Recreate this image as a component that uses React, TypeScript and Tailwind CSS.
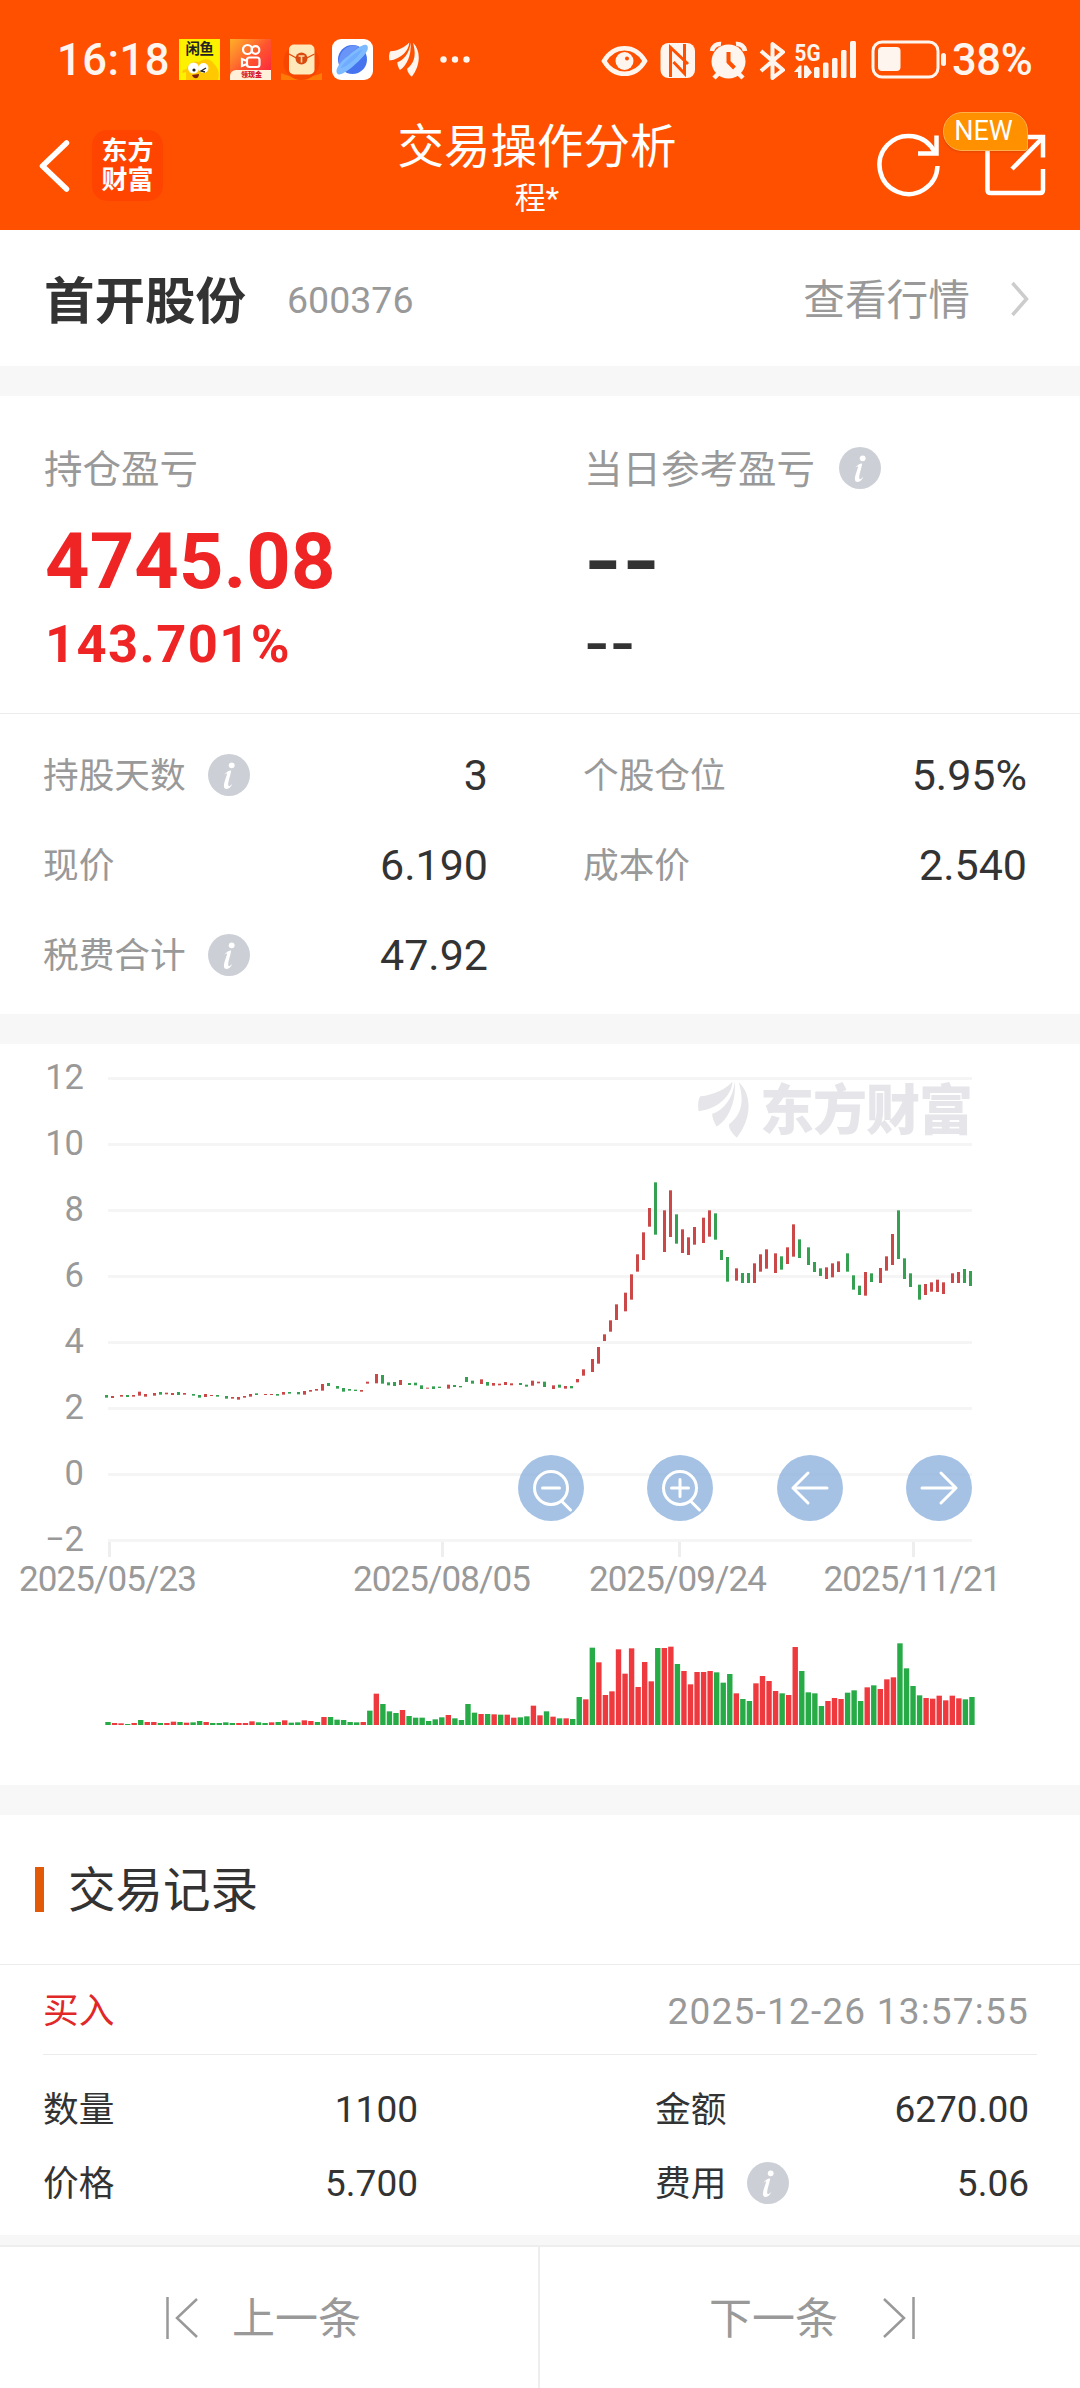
import React from "react";

type Row = [dir: "r" | "g", top: number, bottom: number, volume: number];

// Daily bars: direction, top and bottom of the candle, height of the volume column (thirds of a pixel).
const LOW: Row[] = [
  ["g", 165, 173, 9], ["r", 168, 174, 6], ["r", 165, 170, 5], ["g", 165, 171, 3], ["r", 165, 170, 6],
  ["r", 155, 167, 15], ["r", 162, 170, 9], ["r", 159, 167, 9], ["g", 156, 164, 6], ["r", 158, 163, 6],
  ["r", 159, 165, 10], ["g", 156, 165, 9], ["r", 159, 164, 7], ["g", 162, 167, 8], ["g", 165, 173, 12],
  ["r", 162, 171, 9], ["r", 165, 168, 6], ["g", 165, 170, 6], ["g", 168, 176, 8], ["r", 171, 176, 6],
  ["r", 171, 179, 6], ["r", 168, 173, 6], ["r", 162, 170, 11], ["g", 160, 165, 8], ["r", 162, 165, 6],
  ["r", 162, 165, 8], ["g", 162, 167, 9], ["r", 156, 164, 14], ["g", 156, 161, 7], ["g", 156, 163, 8],
  ["r", 153, 164, 14], ["r", 150, 155, 12], ["r", 147, 152, 9], ["r", 132, 152, 24], ["g", 129, 138, 24],
  ["g", 138, 146, 16], ["g", 144, 155, 15], ["g", 147, 152, 9], ["g", 149, 153, 8], ["r", 150, 155, 9],
  ["r", 125, 131, 43], ["r", 102, 130, 94], ["g", 105, 131, 63], ["g", 127, 136, 41], ["g", 126, 138, 36],
  ["r", 120, 135, 45], ["g", 129, 135, 27], ["g", 128, 136, 22], ["g", 136, 147, 22], ["r", 143, 146, 12],
  ["g", 139, 147, 17], ["g", 140, 144, 23], ["r", 134, 146, 30], ["g", 135, 141, 20], ["g", 138, 142, 15],
  ["g", 111, 126, 63], ["g", 122, 131, 37], ["r", 118, 132, 33], ["g", 126, 137, 33], ["r", 129, 137, 32],
  ["r", 131, 136, 31], ["r", 126, 135, 31], ["r", 130, 136, 22], ["g", 129, 135, 23], ["g", 134, 140, 26],
  ["r", 122, 137, 58], ["r", 125, 130, 29], ["g", 125, 141, 41], ["r", 136, 147, 25], ["g", 134, 143, 20],
  ["r", 138, 146, 20], ["g", 138, 145, 18], ["r", 117, 127, 84],
];
const HIGH: Row[] = [
  ["r", 928, 947, 77], ["r", 897, 936, 232], ["r", 861, 911, 188], ["r", 823, 843, 90], ["r", 781, 815, 101],
  ["r", 733, 780, 227], ["r", 698, 754, 154], ["r", 643, 719, 230], ["r", 583, 635, 114], ["r", 517, 600, 189],
  ["r", 444, 500, 131], ["g", 367, 524, 231], ["r", 451, 576, 231], ["r", 391, 531, 235], ["g", 463, 551, 183],
  ["r", 508, 579, 162], ["r", 532, 585, 122], ["r", 501, 554, 159], ["r", 473, 549, 159], ["r", 451, 530, 162],
  ["g", 460, 539, 158], ["g", 570, 600, 127], ["g", 591, 665, 153], ["r", 625, 662, 95], ["g", 639, 669, 78],
  ["g", 639, 669, 72], ["r", 610, 669, 125], ["r", 583, 635, 147], ["r", 568, 626, 132], ["r", 580, 639, 102],
  ["g", 589, 629, 95], ["r", 562, 612, 90], ["r", 493, 590, 234], ["g", 538, 594, 162], ["g", 562, 615, 98],
  ["g", 606, 636, 95], ["g", 625, 648, 57], ["r", 622, 657, 72], ["r", 610, 652, 81], ["r", 604, 636, 78],
  ["g", 580, 635, 97], ["g", 646, 689, 104], ["g", 677, 705, 72], ["r", 636, 707, 113], ["g", 640, 666, 119],
  ["r", 624, 669, 108], ["r", 589, 632, 137], ["r", 522, 615, 143], ["g", 451, 597, 245], ["g", 595, 657, 170],
  ["g", 640, 681, 117], ["g", 674, 719, 89], ["r", 672, 705, 81], ["r", 667, 695, 79], ["r", 659, 696, 88],
  ["r", 667, 702, 74], ["r", 640, 669, 88], ["r", 636, 669, 80], ["g", 627, 669, 77], ["g", 633, 678, 84],
];

const BARS = [
  ...LOW.map(([d, t, b, v]) => ({ d, y: 296 + t / 3, h: (b - t) / 3, v: v / 3 })),
  ...HIGH.map(([d, t, b, v]) => ({ d, y: 16 + t / 3, h: (b - t) / 3, v: v / 3 })),
];

// Colours of the volume columns, ten to a group.
const VOLUME_COLORS = [
  "grrgrgrrgr", "rgrggrgggg", "rrrggrgrgg", "rrgrgggggr", "grgggrgggg", "ggrggggrgr", "grrggrrgrg",
  "rggrgrrrrr", "rrrrgrrgrr", "rrrgggrggr", "rrrgrrgggg", "rrrgggrgrr", "rggggrrrrr", "rgg",
].join("");

function Info() {
  return (
    <svg className="size-[42px] shrink-0" viewBox="0 0 42 42">
      <circle cx="21" cy="21" r="21" fill="#ccd0d6" />
      <circle cx="23.700" cy="11.300" r="2.900" fill="#fff" />
      <path d="M16.200 20.600c2.500-2.700 5-4.300 7-4.100-.6 4.700-3.300 11-3 14.600.1 2.200 2.200.7 4.200-1.300-1.200 2.700-3.400 5.300-5.700 5.300-5.800-.5-.8-10.200.5-15.300-.8-.6-2 .5-3 .8z" fill="#fff" />
    </svg>
  );
}

function Feather({ className, fill }: { className?: string; fill: string }) {
  return (
    <svg className={className} viewBox="414 62 154 172" preserveAspectRatio="none" fill={fill}>
      <path d="M421 108C460 105 500 85 518 64 517 100 480 145 416 153 413 135 414 118 421 108z" />
      <path d="M525 64C530 125 505 180 470 199 462 185 456 172 457 161 490 150 520 115 525 64z" />
      <path d="M537 66C580 105 575 180 531 233 520 222 508 210 507 193 545 165 555 125 537 66z" />
    </svg>
  );
}

function StatusBar() {
  return (
    <div className="flex h-[118px] items-center pt-[1px] text-[#fff5ef]">
      <span className="ml-[57px] w-[122px] pt-[2px] text-[43.500px] font-medium leading-none tracking-[0.5px]">16:18</span>
      <div className="relative size-[41px] overflow-hidden bg-[#fdf100]">
        <span className="block pt-[4px] text-center text-[14.500px] font-bold leading-none tracking-[-0.5px] text-[#222]">闲鱼</span>
        <svg className="absolute inset-0 size-[41px]" viewBox="0 0 41 41">
          <path d="M7 41V33L3 34 4 31 8 30C9 24 14 22 20 23c5-4 12-4 15 2 4 4 6 9 4 16z" fill="#ffc800" />
          <circle cx="14.500" cy="29" r="5.500" fill="#fff" /><circle cx="24.500" cy="29" r="5" fill="#fff" />
          <circle cx="15" cy="31" r="1.600" fill="#222" /><path d="M27 29l-5 3 4 1" stroke="#222" strokeWidth="1.300" fill="none" />
          <path d="M13 36l7-1c0 5-5 6-7 1z" fill="#7d2010" />
        </svg>
      </div>
      <div className="ml-[10px] flex h-[41px] w-[41px] flex-col bg-linear-to-br from-[#ffae27] via-[#ff542e] to-[#fa0340]">
        <svg className="h-[31px] w-[41px]" viewBox="0 0 41 31" fill="none" stroke="#fff" strokeWidth="2.200">
          <circle cx="17.500" cy="10.500" r="4.500" /><circle cx="25.500" cy="11" r="3.800" />
          <rect x="17" y="18.500" width="12.500" height="9.500" rx="2.500" /><path d="M17 22l-5-2v7l5-2" />
        </svg>
        <span className="block h-[10px] rounded-tl-md bg-[#fff0da] pl-[11px] text-[7px] font-black leading-[10px] text-[#d6122c]">领现金</span>
      </div>
      <svg className="ml-[10px] size-[41px]" viewBox="0 0 41 41">
        <rect width="41" height="41" fill="#ff4f00" />
        <path d="M0 41V34Q20 43 41 34V41z" fill="#ff7b08" />
        <circle cx="20.500" cy="23" r="18" fill="#f64600" />
        <rect x="8" y="5.500" width="25.500" height="30" rx="5" fill="#ffe8ba" />
        <path d="M8 15q6 4 12.500 5.500Q27 19 33.500 15" fill="none" stroke="#e14c0c" strokeWidth="1.200" />
        <circle cx="20.500" cy="19.500" r="6" fill="#da4b10" />
        <path d="M17.500 17h6M20.500 17v6.500" stroke="#ffd9a0" strokeWidth="1.600" />
      </svg>
      <svg className="ml-[10px] size-[41px]" viewBox="0 0 41 41">
        <rect width="41" height="41" rx="9" fill="#fff" />
        <circle cx="20.500" cy="20.500" r="14.500" fill="#4674ee" />
        <path d="M7 23C7 11 18 4 27 7.500 20 13 12 20 7 28z" fill="#6a95f8" />
        <path d="M5.500 35C2 31 8 23 16 17 24 10 33 3 35.500 7c2 4-4 11-12 18C16 32 8 37 5.500 35z" fill="#7dbaff" />
        <path d="M8.500 29C12 23 25 12 30.500 10.500 27 17 14 29 8.500 29z" fill="#6fabff" />
      </svg>
      <Feather className="ml-[16px] h-[35px] w-[30px]" fill="#fff5ef" />
      <svg className="ml-[21px] h-[7px] w-[30px]" viewBox="0 0 30 7" fill="#fff5ef">
        <circle cx="3.500" cy="3.500" r="3.200" /><circle cx="15" cy="3.500" r="3.200" /><circle cx="26.500" cy="3.500" r="3.200" />
      </svg>
      <svg className="ml-[131px] h-[42px] w-[346px]" viewBox="601 39 346 42" fill="#fff5ef">
        <path d="M604 61c10-17 31-17 41 0-10 17-31 17-41 0z" fill="none" stroke="#fff5ef" strokeWidth="4.500" />
        <circle cx="624.500" cy="61" r="9" /><circle cx="627" cy="58.500" r="2" fill="#ff5000" />
        <rect x="660.500" y="43" width="34.500" height="35" rx="8" />
        <path d="M670.500 77V47.500L688 64M684.500 44V73.500L673.500 62" fill="none" stroke="#ff5000" strokeWidth="3" />
        <circle cx="728.500" cy="61.500" r="17" />
        <path d="M712 51a8 8 0 0 1 9-7M745 51a8 8 0 0 0-9-7M719 73l-5 5M738 73l5 5" fill="none" stroke="#fff5ef" strokeWidth="4.500" />
        <path d="M728.500 52v10l6 6" fill="none" stroke="#ff5000" strokeWidth="4" />
        <path d="M761 51l22 19-10.500 8V44L783 52l-22 19" fill="none" stroke="#fff5ef" strokeWidth="4" strokeLinejoin="round" />
        <text x="794.500" y="60.500" fontSize="24" fontWeight="700" textLength="26" lengthAdjust="spacingAndGlyphs">5G</text>
        <path d="M794 72l5.500-6.500h2V78h-3.500v-6zM804 65.500h3l5 7-5 5.500h-3z" />
        <rect x="814" y="67" width="5.500" height="11" rx="1.500" /><rect x="823" y="62.500" width="5.500" height="15.500" rx="1.500" />
        <rect x="832" y="58" width="5.500" height="20" rx="1.500" /><rect x="841" y="50" width="5.500" height="28" rx="1.500" />
        <rect x="850" y="41" width="6" height="37" rx="1.500" />
        <rect x="873" y="42" width="65" height="35" rx="9" fill="none" stroke="#fff5ef" strokeWidth="3" />
        <rect x="878" y="47" width="22.500" height="24" rx="4" /><rect x="941" y="53" width="5" height="13" rx="2.500" />
      </svg>
      <span className="ml-[5px] pt-[2px] text-[43.500px] font-medium leading-none tracking-[-0.4px]">38%</span>
    </div>
  );
}

function Header() {
  return (
    <header className="h-[230px] bg-[#ff5000] text-white">
      <StatusBar />
      <div className="grid h-[112px] grid-cols-[398px_278px_404px]">
        <div className="flex items-start">
          <svg className="ml-[38px] mt-[20px] h-[56px] w-[33px]" viewBox="0 0 33 56" fill="none" stroke="#fff" strokeWidth="5.500" strokeLinecap="round" strokeLinejoin="round">
            <path d="M28.500 5 4.500 28 28.500 51" />
          </svg>
          <div className="ml-[21px] mt-[12px] flex h-[71px] w-[71px] flex-col items-center justify-center rounded-[15px] bg-[#ff4400] text-[26px] font-bold leading-[29px]">
            <span>东方</span>
            <span>财富</span>
          </div>
        </div>
        <div className="flex flex-col items-center whitespace-nowrap">
          <h1 className="mt-[6px] text-[46.500px] leading-none">交易操作分析</h1>
          <p className="mt-[12px] text-[31px] leading-none">程*</p>
        </div>
        <div className="relative">
          <svg className="h-[90px] w-[404px]" viewBox="676 118 404 90" fill="none" stroke="#fff" strokeWidth="4.500">
            <path d="M934.600 152.300A29 29 0 1 0 937.500 166" />
            <path d="M936.500 135.500V153.500H918" />
            <path d="M987.500 145V190q0 3 3 3H1040q3 0 3-3V169M1043 157.500V137H1025" />
            <path d="M1041 139.500 1012 169" />
          </svg>
          <span className="absolute left-[267px] top-[-6px] flex h-[39px] w-[85px] items-center justify-center rounded-[19px] rounded-br-[3px] border border-[#ffb04d] bg-[#ff9000] pr-[4px] text-[27px] leading-none shadow-sm">NEW</span>
        </div>
      </div>
    </header>
  );
}

function Stat({ label, value, info }: { label: string; value: string; info?: boolean }) {
  return (
    <div className="flex h-[90px] items-center">
      <span className="pt-[4px] text-[35.700px] leading-none text-[#999]">{label}</span>
      {info && <span className="ml-[22px] flex"><Info /></span>}
      <span className="ml-auto text-[43px] leading-none text-[#333]">{value}</span>
    </div>
  );
}

function Detail({ label, value, info }: { label: string; value: string; info?: boolean }) {
  return (
    <div className="flex h-[74px] items-center text-[#333]">
      <span className="pt-[4px] text-[35.700px] leading-none">{label}</span>
      {info && <span className="ml-[21px] flex"><Info /></span>}
      <span className="ml-auto text-[37px] leading-none">{value}</span>
    </div>
  );
}

function Chart() {
  const red = "#cb4848";
  const green = "#35a052";
  return (
    <section className="relative h-[741px] bg-white">
      <svg className="block h-[741px] w-[1080px]" viewBox="0 0 1080 741">
        {[12, 10, 8, 6, 4, 2, 0, -2].map((n, i) => (
          <g key={n}>
            <rect x="108" y={33 + i * 66} width="864" height="3" fill="#f5f5f5" />
            <text x="84" y={45 + i * 66} textAnchor="end" fontSize="34.500" fill="#999">{n < 0 ? "−2" : n}</text>
          </g>
        ))}
        {[
          ["2025/05/23", 108, 109.5], ["2025/08/05", 442, 442.5], ["2025/09/24", 678, 679.5], ["2025/11/21", 912.5, 913.5],
        ].map(([t, x, tick]) => (
          <g key={t}>
            <rect x={Number(tick) - 1.5} y="498" width="3" height="15" fill="#eee" />
            <text x={x} y="547" textAnchor="middle" fontSize="35" fill="#999" textLength="178">{t}</text>
          </g>
        ))}
        <text x="760" y="86" fontSize="54" fontWeight="900" fill="#e6e6ea" textLength="213">东方财富</text>
        {BARS.map((b, i) => (
          <g key={i}>
            <rect x={105 + 3 * Math.floor(i * 2.18 + 0.78)} y={b.y} width="3" height={b.h} fill={b.d === "r" ? red : green} />
            <rect x={105.3 + i * 6.545} y={681 - b.v} width="5.400" height={b.v} fill={VOLUME_COLORS[i] === "r" ? "#ee3a3e" : "#26ab46"} />
          </g>
        ))}
      </svg>
      <Feather className="absolute left-[698px] top-[37px] h-[57px] w-[51px]" fill="#e6e6ea" />
      <div className="absolute left-[518px] top-[411px] flex w-[454px] justify-between">
        <ChartButton><circle cx="33" cy="33" r="16.500" /><path d="M24.500 33h17M44 46.500l8.500 8.500" /></ChartButton>
        <ChartButton><circle cx="33" cy="33" r="16.500" /><path d="M24.500 33h17M33 24.500v17M44 46.500l8.500 8.500" /></ChartButton>
        <ChartButton><path d="M50 33H16M31 18 16 33l15 15" /></ChartButton>
        <ChartButton><path d="M16 33h34M35 18l15 15-15 15" /></ChartButton>
      </div>
    </section>
  );
}

function ChartButton({ children }: { children: React.ReactNode }) {
  return (
    <button className="size-[66px] rounded-full bg-[#87addb]/75">
      <svg viewBox="0 0 66 66" fill="none" stroke="#fff" strokeWidth="3" strokeLinecap="round" strokeLinejoin="round">{children}</svg>
    </button>
  );
}

export default function App() {
  return (
    <div className="h-[2388px] w-[1080px] overflow-hidden bg-[#f7f7f7] font-['Roboto','Noto_Sans_CJK_SC',sans-serif]">
      <Header />
      <section className="flex h-[136px] items-center bg-white pl-[44px]">
        <h2 className="pt-[8px] text-[50.500px] font-bold leading-none text-[#333]">首开股份</h2>
        <span className="ml-[41px] pt-[5px] text-[37.500px] leading-none text-[#999]">600376</span>
        <span className="ml-auto pt-[6px] text-[41.700px] leading-none text-[#999]">查看行情</span>
        <svg className="ml-[41px] mr-[51px] mt-[2px] h-[36px] w-[18px]" viewBox="0 0 18 36" fill="none" stroke="#ccc" strokeWidth="3.500">
          <path d="M1.500 2 15.500 18 1.500 34" />
        </svg>
      </section>

      <section className="mt-[30px] bg-white">
        <div className="grid h-[317px] grid-cols-[540px_540px]">
          <div className="pl-[44px] font-bold text-[#ef2424]">
            <div className="mt-[51px] flex h-[42px] items-center pt-[4px] text-[38.500px] font-normal leading-none text-[#999]">持仓盈亏</div>
            <div className="mt-[34px] pl-[1px] text-[77.500px] leading-none tracking-[0.2px]">4745.08</div>
            <div className="mt-[17px] pl-[1px] text-[52.500px] leading-none tracking-[1.400px]">143.701%</div>
          </div>
          <div className="pl-[44px] font-bold text-[#333]">
            <div className="mt-[51px] flex h-[42px] items-center text-[38.500px] font-normal leading-none text-[#999]">
              <span className="pt-[4px]">当日参考盈亏</span>
              <span className="ml-[24px] flex"><Info /></span>
            </div>
            <div className="mt-[35px] origin-left scale-x-125 text-[77.500px] leading-none">--</div>
            <div className="mt-[16px] origin-left scale-x-125 text-[52.500px] leading-none">--</div>
          </div>
        </div>
        <div className="grid h-[301px] grid-cols-[445px_444px] content-start gap-x-[95px] border-t border-[#ececec] pl-[43px] pt-[16px]">
          <Stat label="持股天数" value="3" info />
          <Stat label="个股仓位" value="5.95%" />
          <Stat label="现价" value="6.190" />
          <Stat label="成本价" value="2.540" />
          <Stat label="税费合计" value="47.92" info />
        </div>
      </section>

      <div className="mt-[30px]"><Chart /></div>

      <section className="mt-[30px] h-[420px] bg-white">
        <div className="flex h-[150px] items-center border-b border-[#ececec] pl-[35px]">
          <span className="h-[45px] w-[9px] bg-[#e25a08]" />
          <h3 className="ml-[24px] pt-[5px] text-[47.500px] leading-none text-[#333]">交易记录</h3>
        </div>
        <div className="ml-[43px] mr-[43px] flex h-[90px] items-center justify-between border-b border-[#ececec] pr-[8px]">
          <span className="pt-[4px] text-[35.700px] leading-none text-[#e02828]">买入</span>
          <span className="pt-[3px] text-[37px] leading-none tracking-[1.200px] text-[#999]">2025-12-26 13:57:55</span>
        </div>
        <div className="grid grid-cols-[375px_374px] gap-x-[237px] pl-[43px] pt-[17px]">
          <Detail label="数量" value="1100" />
          <Detail label="金额" value="6270.00" />
          <Detail label="价格" value="5.700" />
          <Detail label="费用" value="5.06" info />
        </div>
      </section>

      <footer className="mt-[10px] grid h-[143px] grid-cols-2 border-t-2 border-[#eee] bg-white text-[43px] leading-none text-[#999]">
        <div className="flex items-center border-r-2 border-[#eee] pl-[165px]">
          <svg className="h-[42px] w-[34px]" viewBox="0 0 34 42" fill="none" stroke="#999" strokeWidth="2.500"><path d="M2.500 0v42M32 2 12 21 32 40" /></svg>
          <span className="ml-[33px] pt-[4px]">上一条</span>
        </div>
        <div className="flex items-center pl-[169px]">
          <span className="pt-[4px]">下一条</span>
          <svg className="ml-[44px] h-[42px] w-[34px]" viewBox="0 0 34 42" fill="none" stroke="#999" strokeWidth="2.500"><path d="M31.500 0v42M2 2 22 21 2 40" /></svg>
        </div>
      </footer>
    </div>
  );
}
